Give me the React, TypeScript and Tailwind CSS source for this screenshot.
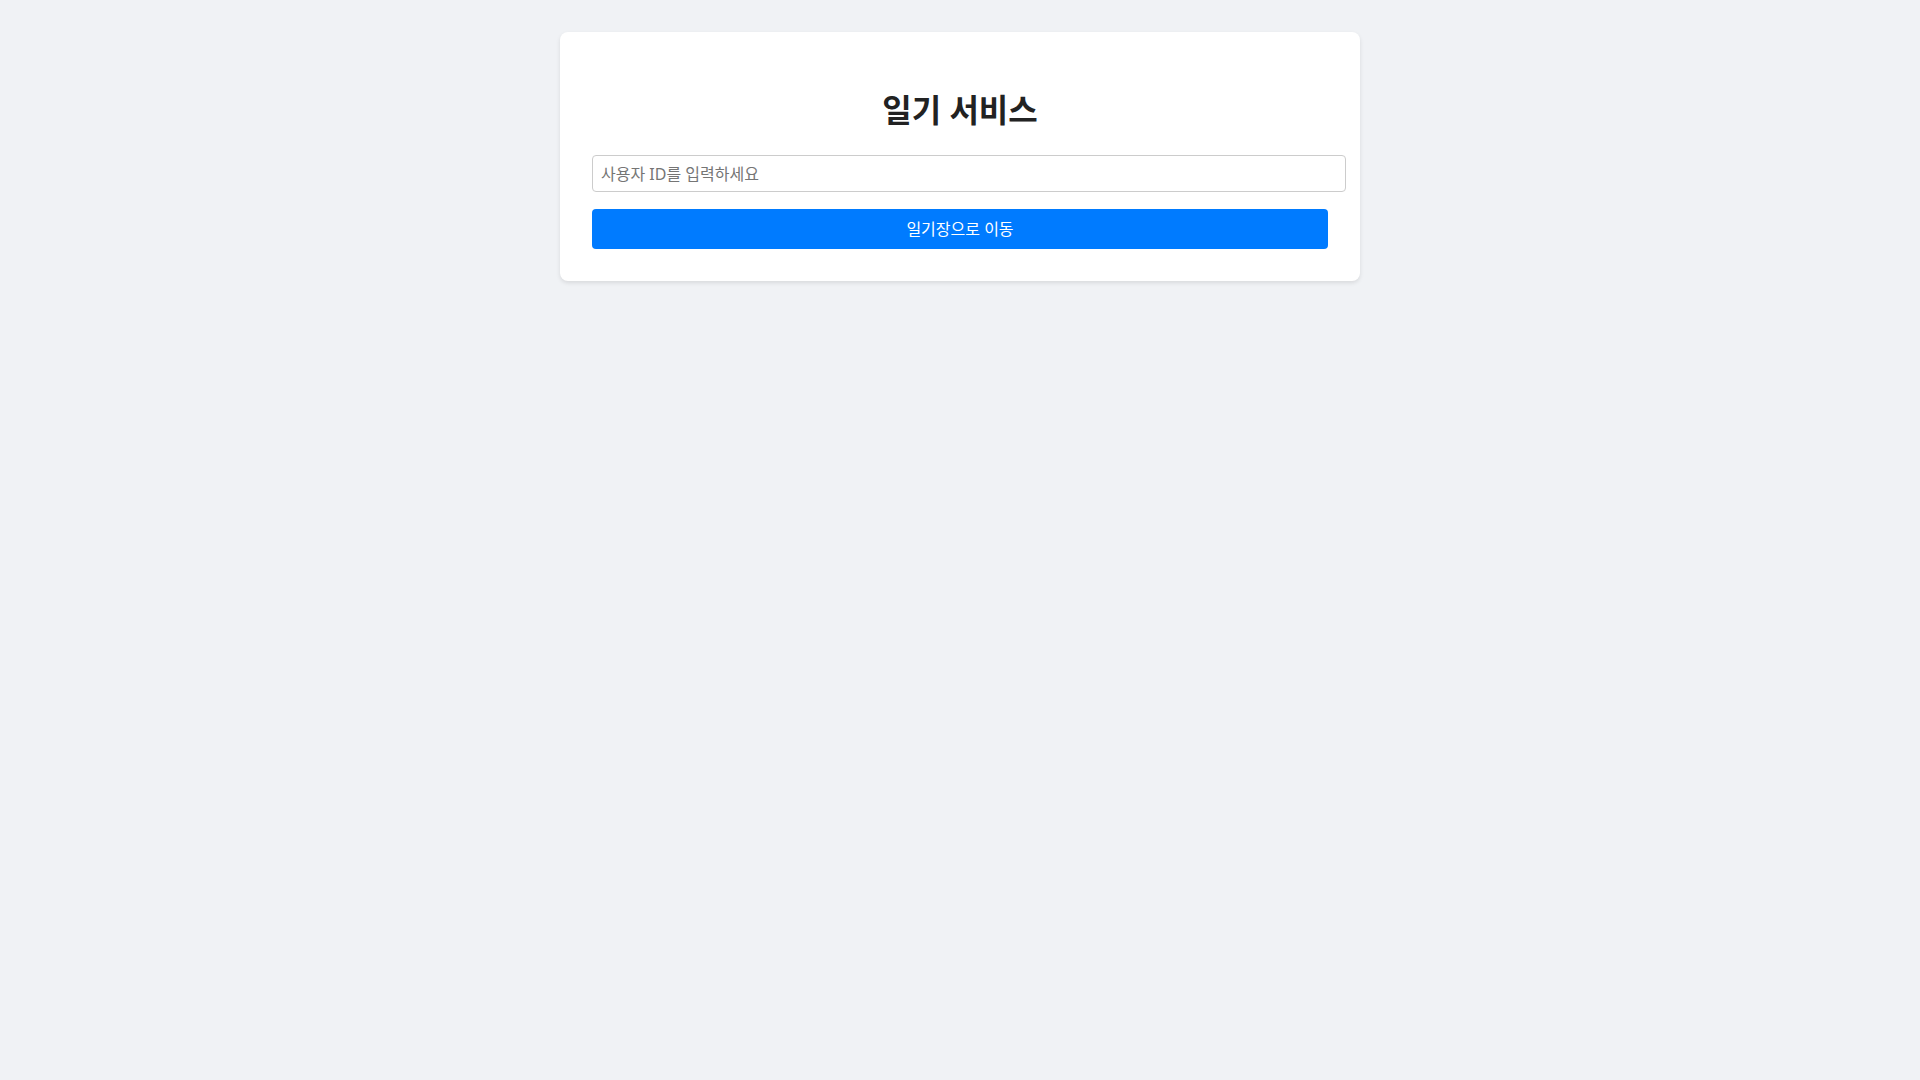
export default function App() {
  return (
    <div className="min-h-screen bg-[#f0f2f5] pt-8 font-['Noto_Sans','Noto_Sans_CJK_KR',sans-serif]">
      <div className="mx-auto w-[800px] rounded-lg bg-white p-8 shadow-[0_2px_4px_rgba(0,0,0,0.1)]">
        <h1 className="mt-[23px] mb-[22px] text-center text-[32px] font-bold leading-[46px] text-[#222]">
          일기 서비스
        </h1>
        <input
          type="text"
          placeholder="사용자 ID를 입력하세요"
          className="block h-[37px] w-[754px] rounded border border-[#ccc] px-2 text-base text-[#333] placeholder:text-[#757575] outline-none"
        />
        <button className="mt-[17px] block h-10 w-full rounded bg-[#007bff] text-base text-white">
          일기장으로 이동
        </button>
      </div>
    </div>
  );
}
